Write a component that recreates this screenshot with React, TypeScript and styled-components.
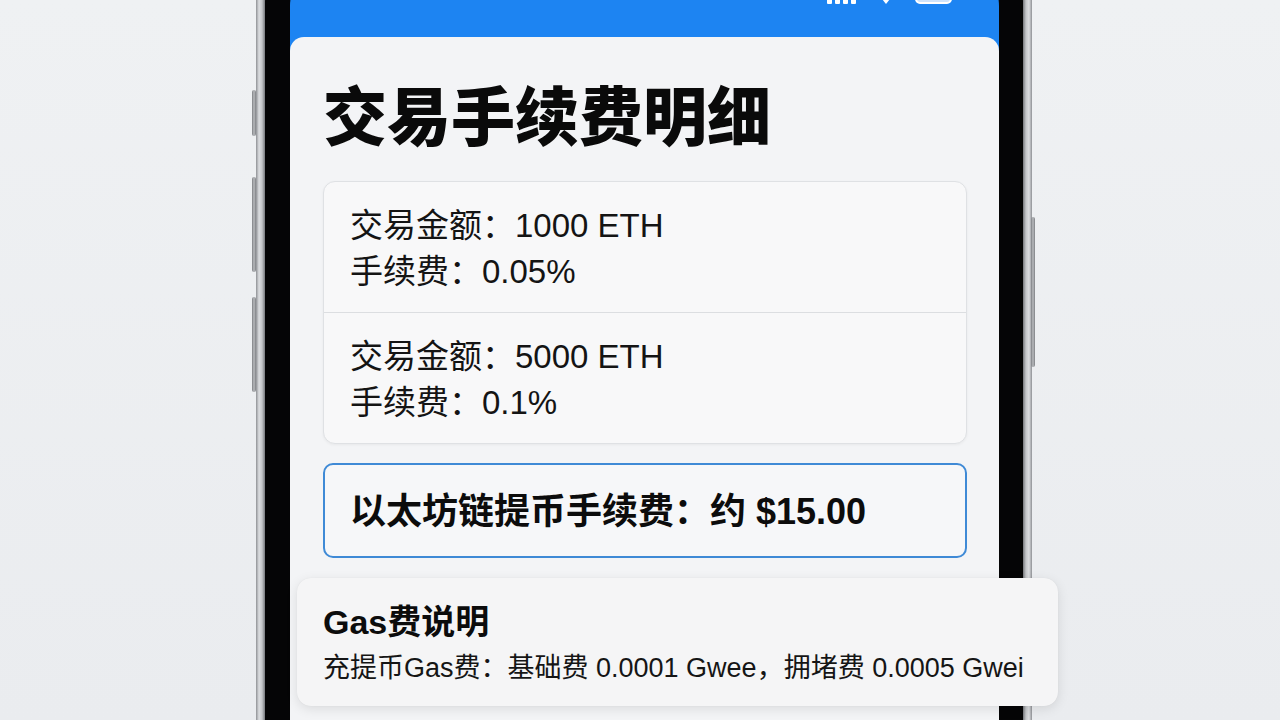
import React from "react";
import styled, { createGlobalStyle } from "styled-components";

const Global = createGlobalStyle`
  html, body { margin: 0; padding: 0; background: #eceef1; }
  body { font-family: "Liberation Sans", "Noto Sans CJK SC", sans-serif; color: #111; }
  * { box-sizing: border-box; }
`;

const Stage = styled.div`
  width: 1280px;
  height: 720px;
  overflow: hidden;
  display: flex;
  align-items: flex-start;
  background: linear-gradient(180deg, #eff1f3 0%, #eaecef 100%);
`;

const Phone = styled.div`
  position: relative;
  flex: none;
  margin: -74px 0 0 256px;
  width: 776px;
  height: 900px;
  padding: 9px 9px;
  border-radius: 76px;
  background: linear-gradient(
    90deg,
    #8f9195 0px,
    #dcdee1 3px,
    #c4c6c9 6px,
    #76787c 9px,
    #76787c calc(100% - 9px),
    #c4c6c9 calc(100% - 6px),
    #dcdee1 calc(100% - 3px),
    #8f9195 100%
  );
`;

const SideKey = styled.div<{ $top: number; $h: number; $right?: boolean }>`
  position: absolute;
  top: ${(p) => p.$top}px;
  height: ${(p) => p.$h}px;
  width: 4px;
  ${(p) => (p.$right ? "right: -3px;" : "left: -4px;")}
  border-radius: 2px;
  background: linear-gradient(90deg, #7d7f83, #b9bbbe, #7d7f83);
`;

const Bezel = styled.div`
  height: 100%;
  border-radius: 68px;
  background: #050506;
  padding: 25px 24px 25px 25px;
`;

const Screen = styled.div`
  height: 100%;
  border-radius: 46px;
  background: #1d84f2;
  display: flex;
  flex-direction: column;
`;

const StatusBar = styled.div`
  height: 77px;
  flex: none;
  display: flex;
  justify-content: flex-end;
  align-items: flex-start;
  padding: 30px 44px 0 47px;
  color: #fff;
`;

const StatusIcons = styled.div`
  display: flex;
  align-items: flex-end;
  gap: 20px;
  height: 14px;
`;

const Sheet = styled.div`
  flex: 1;
  background: #f3f4f6;
  border-radius: 14px 14px 0 0;
  padding: 36px 32px 0 33px;
  display: flex;
  flex-direction: column;
`;

const Title = styled.h1`
  margin: 0;
  font-family: "Noto Sans CJK SC", sans-serif;
  font-size: 64px;
  font-weight: 900;
  line-height: 78px;
  color: #0a0a0a;
`;

const ListCard = styled.div`
  margin-top: 30px;
  background: #f8f8f9;
  border: 1px solid #dfe1e4;
  border-radius: 12px;
  box-shadow: 0 1px 3px rgba(0, 0, 0, 0.05);
`;

const Row = styled.div<{ $divider?: boolean }>`
  height: ${(p) => (p.$divider ? 131 : 130)}px;
  padding: 21px 27px 0 26px;
  border-bottom: ${(p) => (p.$divider ? "1px solid #dcdee1" : "none")};
`;

const Line = styled.div`
  font-size: 33px;
  line-height: 46px;
  color: #141414;
  white-space: nowrap;
`;

const FeeBox = styled.div`
  margin-top: 19px;
  height: 95px;
  border: 2px solid #3f8ad6;
  border-radius: 10px;
  background: #f6f7f9;
  display: flex;
  align-items: center;
  padding: 0 25px 6px;
  font-size: 36px;
  font-weight: 700;
  color: #0c0c0c;
  white-space: nowrap;
`;

const NoteCard = styled.div`
  margin: 20px -91px 0 -26px;
  height: 128px;
  background: #f5f5f6;
  border-radius: 14px;
  box-shadow: 0 3px 12px rgba(0, 0, 0, 0.1), 0 0 1px rgba(0, 0, 0, 0.08);
  padding: 23px 20px 0 26px;
  position: relative;
`;

const NoteTitle = styled.div`
  font-size: 34px;
  font-weight: 700;
  line-height: 42px;
  color: #0c0c0c;
`;

const NoteText = styled.div`
  margin-top: 7px;
  font-size: 27px;
  line-height: 36px;
  color: #151515;
  white-space: nowrap;
`;

const Signal = () => (
  <svg width="30" height="16" viewBox="0 0 30 16">
    <rect x="0" y="10" width="5" height="6" rx="1" fill="#fff" />
    <rect x="8" y="7" width="5" height="9" rx="1" fill="#fff" />
    <rect x="16" y="4" width="5" height="12" rx="1" fill="#fff" />
    <rect x="24" y="0" width="5" height="16" rx="1" fill="#fff" />
  </svg>
);

const Wifi = () => (
  <svg width="18" height="16" viewBox="0 0 18 16">
    <path d="M9 16 L5 11 Q9 8 13 11 Z" fill="#fff" />
    <path d="M2 7 Q9 1 16 7" stroke="#fff" strokeWidth="2.4" fill="none" />
  </svg>
);

const Battery = () => (
  <svg width="40" height="18" viewBox="0 0 40 18">
    <rect x="1" y="1" width="35" height="16" rx="4" fill="#cfe3fb" stroke="#fff" strokeWidth="2" />
    <rect x="37" y="6" width="3" height="6" rx="1" fill="#fff" />
  </svg>
);

export default function App() {
  return (
    <>
      <Global />
      <Stage>
        <Phone>
          <SideKey $top={164} $h={46} />
          <SideKey $top={251} $h={95} />
          <SideKey $top={371} $h={95} />
          <SideKey $right $top={291} $h={150} />
          <Bezel>
            <Screen>
              <StatusBar>
                <StatusIcons>
                  <Signal />
                  <Wifi />
                  <Battery />
                </StatusIcons>
              </StatusBar>
              <Sheet>
                <Title>交易手续费明细</Title>
                <ListCard>
                  <Row $divider>
                    <Line>交易金额：1000 ETH</Line>
                    <Line>手续费：0.05%</Line>
                  </Row>
                  <Row>
                    <Line>交易金额：5000 ETH</Line>
                    <Line>手续费：0.1%</Line>
                  </Row>
                </ListCard>
                <FeeBox>以太坊链提币手续费：约 $15.00</FeeBox>
                <NoteCard>
                  <NoteTitle>Gas费说明</NoteTitle>
                  <NoteText>充提币Gas费：基础费 0.0001 Gwee，拥堵费 0.0005 Gwei</NoteText>
                </NoteCard>
              </Sheet>
            </Screen>
          </Bezel>
        </Phone>
      </Stage>
    </>
  );
}
